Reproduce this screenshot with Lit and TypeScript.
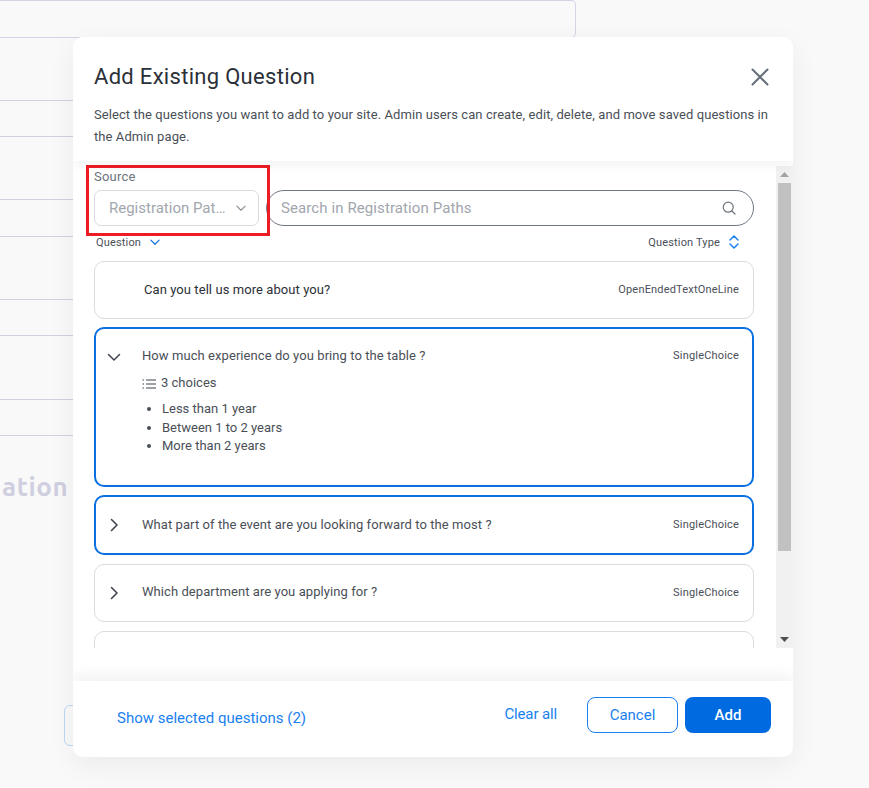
import { LitElement, html, css } from "lit";
import { customElement } from "lit/decorators.js";

const chevDown = (c: string, s = 16) => html`<svg width=${s} height=${s} viewBox="0 0 16 16" fill="none" stroke=${c} stroke-width="1.5" stroke-linecap="round" stroke-linejoin="round"><path d="M2.5 5.5 8 11l5.5-5.5"/></svg>`;
const chevRight = html`<svg width="16" height="16" viewBox="0 0 16 16" fill="none" stroke="#3f4650" stroke-width="1.6" stroke-linecap="round" stroke-linejoin="round"><path d="M5.5 2.5 11 8l-5.500 5.500"/></svg>`;

@customElement("app-root")
export class AppRoot extends LitElement {
  static styles = css`
    :host { display: block; position: relative; width: 869px; height: 788px; overflow: hidden; background: #f9f9fa;
      font-family: Roboto, "Liberation Sans", sans-serif; color: #4a4f57; }
    * { box-sizing: border-box; }
    .page { width: 576px; }
    .topbox { height: 38px; border: 1px solid #d3d3e6; border-left: 0; border-radius: 0 5px 5px 0; }
    .rows { margin-top: 62px; }
    .rows i { display: block; border-top: 1px solid #cfcfe0; }
    .r36 { height: 36px; } .r63 { height: 63px; } .r37 { height: 37px; } .r64 { height: 64px; }
    .ghost { margin-top: 36px; padding-left: 2px; font: 700 26px Ubuntu, "Open Sans", sans-serif; color: #cfcfdf; height: 30px; line-height: 30px; white-space: nowrap; letter-spacing: .6px; }
    .ghostbtn { margin: 203px 0 0 64px; width: 60px; height: 41px; border: 1px solid #bcd8f7; border-radius: 6px; }

    .modal { position: absolute; left: 73px; top: 37px; width: 720px; height: 720px; background: #fff; border-radius: 10px;
      box-shadow: 0 8px 28px rgba(0,0,0,.06); display: flex; flex-direction: column; overflow: hidden; }
    header { height: 124px; flex: none; padding: 26px 21px 0; position: relative; z-index: 2; background: #fff; box-shadow: 0 4px 12px rgba(0,0,0,.05); }
    .titlerow { display: flex; justify-content: space-between; align-items: center; height: 28px; }
    h1 { margin: 0; font-size: 22px; font-weight: 400; color: #2b3038; letter-spacing: .3px; line-height: 28px; }
    .close { margin-right: 3px; display: block; }
    header p { margin: 13px 0 0; font-size: 13px; line-height: 22px; color: #4a4f57; letter-spacing: .08px; width: 690px; }

    .body { flex: none; height: 487px; display: flex; position: relative; overflow: hidden; }
    .content { width: 703px; padding: 8px 22px 0 21px; flex: none; overflow: hidden; }
    .label { font-size: 13px; line-height: 16px; color: #6c737d; height: 21px; letter-spacing: .2px; }
    .filters { display: flex; gap: 7px; height: 36px; }
    .select { width: 165px; border: 1px solid #d9dadd; border-radius: 7px; display: flex; align-items: center; justify-content: space-between; padding: 0 11px 0 14px; font-size: 15px; color: #a2a6ad; letter-spacing: 0; }
    .search { flex: 1; border: 1px solid #6e7580; border-radius: 18px; display: flex; align-items: center; justify-content: space-between; padding: 0 17px 0 14px; font-size: 15px; color: #a2a6ad; letter-spacing: .1px; }
    .sort { display: flex; justify-content: space-between; align-items: center; height: 16px; margin-top: 8px; padding: 0 14px 0 2px; font-size: 11px; color: #4a4f57; letter-spacing: .16px; }
    .sort span { display: flex; align-items: center; gap: 8px; }
    .list { margin-top: 11px; display: flex; flex-direction: column; gap: 8px; }
    .card { border: 1px solid #dcdcdc; border-radius: 10px; flex: none; height: 58px; display: flex; align-items: flex-start; justify-content: space-between; padding: 20px 14px 0 11px; font-size: 13px; color: #4a4f57; letter-spacing: .07px; }
    .card.first { padding-left: 49px; color: #2b3038; }
    .card.sel { border: 2px solid #0a6fe0; padding: 20px 13px 0 10px; height: 60px; }
    .card.open { height: 160px; padding-top: 19px; }
    .card.after { margin-top: 1px; }
    .left { display: flex; gap: 20px; }
    .left svg { flex: none; }
    .card.open .left svg:first-child { margin-top: 1px; }
    .card.plain .q { margin-top: -1px; }
    .q { line-height: 16px; }
    .type { font-size: 11px; line-height: 16px; color: #4a4f57; letter-spacing: .18px; }
    .choices { display: flex; align-items: center; gap: 5px; margin-top: 11px; line-height: 16px; letter-spacing: 0; }
    ul { margin: 9px 0 0; padding: 0 0 0 20px; line-height: 18.500px; letter-spacing: 0; }
    .stub { height: 58px; }

    .scrollbar { width: 17px; margin-top: 5px; height: 482px; background: #f1f1f1; display: flex; flex-direction: column; align-items: center; flex: none; }
    .arrow { height: 17px; flex: none; display: flex; align-items: center; justify-content: center; }
    .thumb { width: 13px; height: 368px; background: #c1c1c1; flex: none; }
    .spacer { flex: 1; }

    footer { flex: none; margin-top: 33px; height: 76px; background: #fff; box-shadow: 0 -5px 14px rgba(0,0,0,.06); display: flex; align-items: flex-start; padding: 16px 22px 0 44px; position: relative; }
    .show { font-size: 15px; color: #1a7ff0; line-height: 20px; margin-top: 11px; flex: 1; letter-spacing: 0; }
    .clear { font-size: 15px; color: #1a7ff0; line-height: 20px; margin: 7px 30px 0 0; letter-spacing: -.13px; }
    button { font: inherit; font-size: 15px; height: 36px; border-radius: 8px; padding: 0; cursor: pointer; letter-spacing: 0; }
    .cancel { width: 91px; background: #fff; border: 1px solid #1a7ff0; color: #1a7ff0; margin-right: 7px; }
    .add { width: 86px; background: #006be0; border: 0; color: #fff; font-weight: 500; }

    .mark { position: absolute; left: 86px; top: 165px; width: 184px; height: 71px; border: 3px solid #ed1c24; }
  `;

  render() {
    return html`
      <div class="page">
        <div class="topbox"></div>
        <div class="rows">
          <i class="r36"></i><i class="r63"></i><i class="r37"></i><i class="r63"></i>
          <i class="r36"></i><i class="r64"></i><i class="r36"></i><i></i>
        </div>
        <div class="ghost">ation</div>
        <div class="ghostbtn"></div>
      </div>

      <div class="modal">
        <header>
          <div class="titlerow">
            <h1>Add Existing Question</h1>
            <svg class="close" width="18" height="18" viewBox="0 0 18 18" fill="none" stroke="#666e78" stroke-width="2" stroke-linecap="round"><path d="M1.500 1.500l15 15M16.500 1.500l-15 15"/></svg>
          </div>
          <p>Select the questions you want to add to your site. Admin users can create, edit, delete, and move saved questions in the Admin page.</p>
        </header>

        <div class="body">
          <div class="content">
            <div class="label">Source</div>
            <div class="filters">
              <div class="select"><span>Registration Pat…</span>${chevDown("#8b9098", 12)}</div>
              <div class="search"><span>Search in Registration Paths</span>
                <svg width="14" height="14" viewBox="0 0 14 14" fill="none" stroke="#6e7580" stroke-width="1.200" stroke-linecap="round"><circle cx="6.200" cy="6.200" r="5"/><path d="M10 10l3 3"/></svg>
              </div>
            </div>
            <div class="sort">
              <span>Question ${chevDown("#0a6fe0", 12)}</span>
              <span>Question Type
                <svg width="12" height="14" viewBox="0 0 12 14" fill="none" stroke="#1a7ff0" stroke-width="1.500" stroke-linecap="round" stroke-linejoin="round"><path d="M2 5l4-4 4 4M2 9l4 4 4-4"/></svg>
              </span>
            </div>
            <div class="list">
              <div class="card first"><span class="q">Can you tell us more about you?</span><span class="type">OpenEndedTextOneLine</span></div>
              <div class="card sel open">
                <div class="left">${chevDown("#3f4650")}
                  <div>
                    <div class="q">How much experience do you bring to the table ?</div>
                    <div class="choices">
                      <svg width="14" height="12" viewBox="0 0 14 12" fill="none" stroke="#3f4650" stroke-width="1.200"><path d="M4 2h10M4 6h10M4 10h10M.500 2h1.500M.500 6h1.500M.500 10h1.500"/></svg>
                      3 choices
                    </div>
                    <ul><li>Less than 1 year</li><li>Between 1 to 2 years</li><li>More than 2 years</li></ul>
                  </div>
                </div>
                <span class="type">SingleChoice</span>
              </div>
              <div class="card sel">
                <div class="left">${chevRight}<span class="q">What part of the event are you looking forward to the most ?</span></div>
                <span class="type">SingleChoice</span>
              </div>
              <div class="card after plain">
                <div class="left">${chevRight}<span class="q">Which department are you applying for ?</span></div>
                <span class="type">SingleChoice</span>
              </div>
              <div class="card stub after"></div>
            </div>
          </div>
          <div class="scrollbar">
            <div class="arrow"><svg width="9" height="5" viewBox="0 0 9 5"><path d="M0 5h9L4.500 0z" fill="#a3a3a3"/></svg></div>
            <div class="thumb"></div>
            <div class="spacer"></div>
            <div class="arrow"><svg width="9" height="5" viewBox="0 0 9 5"><path d="M0 0h9L4.500 5z" fill="#505050"/></svg></div>
          </div>
        </div>

        <footer>
          <div class="show">Show selected questions (2)</div>
          <div class="clear">Clear all</div>
          <button class="cancel">Cancel</button>
          <button class="add">Add</button>
        </footer>
      </div>

      <div class="mark"></div>
    `;
  }
}
